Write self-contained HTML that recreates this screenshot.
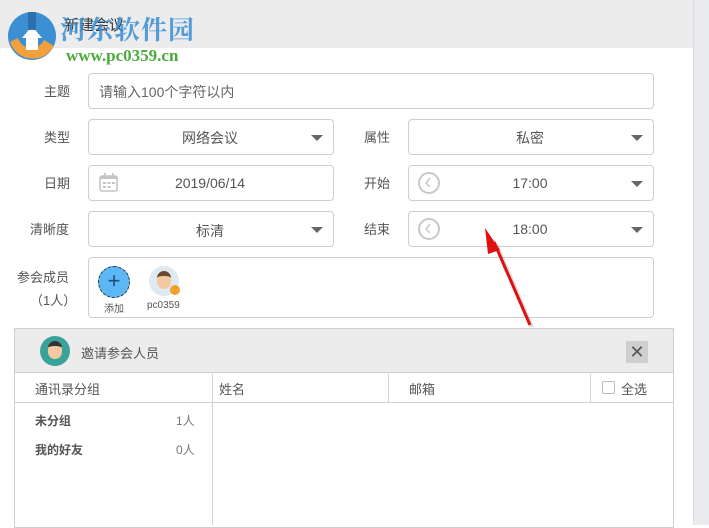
<!DOCTYPE html>
<html><head><meta charset="utf-8"><style>
*{box-sizing:border-box;margin:0;padding:0}
body{width:709px;height:525px;overflow:hidden;background:#fff;font-family:"Liberation Sans","Noto Sans CJK SC",sans-serif;color:#555;font-size:14px;position:relative}
.abs{position:absolute}
.box{position:absolute;border:1px solid #cfcfcf;border-radius:4px;background:#fff}
.lbl{position:absolute;font-size:13px;color:#555}
.val{position:absolute;font-size:14px;color:#555;text-align:center}
.arr{position:absolute;width:0;height:0;border-left:6px solid transparent;border-right:6px solid transparent;border-top:6px solid #666}
</style></head><body>
<div class="abs" style="left:0;top:0;width:693px;height:48px;background:#ececec"></div>
<div class="abs" style="left:693px;top:0;width:16px;height:525px;background:#e9ebee;border-left:1px solid #dcdcdc"></div>
<div class="abs" style="left:64px;top:14px;font-size:15px;color:#333">新建会议</div>
<svg class="abs" style="left:4px;top:8px" width="60" height="60" viewBox="0 0 60 60">
<circle cx="28" cy="28" r="24" fill="#3c8fd3"/>
<path d="M6 34 A24 24 0 0 0 50 38 L40 32 A14 14 0 0 1 14 30Z" fill="#f2a03d"/>
<path d="M18 30 L28 18 L38 30 L34 30 L34 42 L22 42 L22 30Z" fill="#fff"/>
<rect x="24" y="4" width="8" height="18" fill="#2f6fb0"/>
</svg>
<div class="abs" style="left:60px;top:10px;font-size:26px;font-weight:bold;color:#3a8fd6;opacity:.85;letter-spacing:1px;font-family:'Noto Serif CJK SC',serif">河东软件园</div>
<div class="abs" style="left:66px;top:46px;font-size:17px;font-weight:bold;color:#4caa3c;font-family:'Liberation Serif',serif">www.pc0359.cn</div>

<div class="lbl" style="left:44px;top:81px">主题</div>
<div class="box" style="left:88px;top:73px;width:566px;height:36px"></div>
<div class="abs" style="left:99px;top:82px;color:#666">请输入100个字符以内</div>

<div class="lbl" style="left:44px;top:127px">类型</div>
<div class="box" style="left:88px;top:119px;width:246px;height:36px"></div>
<div class="val" style="left:150px;top:128px;width:120px">网络会议</div>
<div class="arr" style="left:311px;top:135px"></div>
<div class="lbl" style="left:364px;top:127px">属性</div>
<div class="box" style="left:408px;top:119px;width:246px;height:36px"></div>
<div class="val" style="left:470px;top:128px;width:120px">私密</div>
<div class="arr" style="left:631px;top:135px"></div>

<div class="lbl" style="left:44px;top:173px">日期</div>
<div class="box" style="left:88px;top:165px;width:246px;height:36px"></div>
<svg class="abs" style="left:98px;top:172px" width="22" height="22" viewBox="0 0 22 22"><rect x="2" y="4" width="17" height="15" rx="2" fill="none" stroke="#c4c4c4" stroke-width="1.6"/><rect x="2" y="4" width="17" height="3" fill="#c4c4c4"/><rect x="6" y="1" width="1.6" height="5" fill="#c4c4c4"/><rect x="14" y="1" width="1.6" height="5" fill="#c4c4c4"/><g fill="#c4c4c4"><rect x="5" y="10" width="3" height="2"/><rect x="9.5" y="10" width="3" height="2"/><rect x="14" y="10" width="3" height="2"/><rect x="5" y="14" width="3" height="2"/><rect x="9.5" y="14" width="3" height="2"/></g></svg>
<div class="val" style="left:150px;top:175px;width:120px">2019/06/14</div>
<div class="lbl" style="left:364px;top:173px">开始</div>
<div class="box" style="left:408px;top:165px;width:246px;height:36px"></div>
<svg class="abs" style="left:417px;top:171px" width="24" height="24" viewBox="0 0 24 24"><circle cx="12" cy="12" r="10" fill="none" stroke="#c8c8c8" stroke-width="2"/><path d="M13 7 L9 12 L13 16" fill="none" stroke="#c8c8c8" stroke-width="1.5"/></svg>
<div class="val" style="left:470px;top:175px;width:120px">17:00</div>
<div class="arr" style="left:631px;top:181px"></div>

<div class="lbl" style="left:30px;top:219px">清晰度</div>
<div class="box" style="left:88px;top:211px;width:246px;height:36px"></div>
<div class="val" style="left:150px;top:221px;width:120px">标清</div>
<div class="arr" style="left:311px;top:227px"></div>
<div class="lbl" style="left:364px;top:219px">结束</div>
<div class="box" style="left:408px;top:211px;width:246px;height:36px"></div>
<svg class="abs" style="left:417px;top:217px" width="24" height="24" viewBox="0 0 24 24"><circle cx="12" cy="12" r="10" fill="none" stroke="#c8c8c8" stroke-width="2"/><path d="M13 7 L9 12 L13 16" fill="none" stroke="#c8c8c8" stroke-width="1.5"/></svg>
<div class="val" style="left:470px;top:221px;width:120px">18:00</div>
<div class="arr" style="left:631px;top:227px"></div>

<div class="lbl" style="left:17px;top:267px;font-size:13px">参会成员</div>
<div class="lbl" style="left:30px;top:290px;font-size:13px">（1人）</div>
<div class="box" style="left:88px;top:257px;width:566px;height:61px"></div>
<div class="abs" style="left:98px;top:266px;width:32px;height:32px;border-radius:50%;background:#5bb8f5;border:1.5px dashed #333;color:#1c4f7a;font-size:22px;line-height:28px;text-align:center">+</div>
<div class="abs" style="left:104px;top:300px;font-size:10px;color:#555">添加</div>
<div class="abs" style="left:149px;top:266px;width:30px;height:30px;border-radius:50%;background:#dfe9f2;overflow:hidden"><div style="margin:5px auto 0;width:14px;height:18px;border-radius:7px;background:#f3c9a4;border-top:5px solid #6a4a2f"></div></div>
<div class="abs" style="left:170px;top:285px;width:10px;height:10px;border-radius:50%;background:#f2a02c"></div>
<div class="abs" style="left:147px;top:300px;font-size:10px;color:#555">pc0359</div>

<div class="abs" style="left:14px;top:328px;width:660px;height:200px;border:1px solid #cfcfcf;background:#fff"></div>
<div class="abs" style="left:15px;top:329px;width:658px;height:44px;background:#ececec;border-bottom:1px solid #d0d0d0"></div>
<div class="abs" style="left:40px;top:336px;width:30px;height:30px;border-radius:50%;background:#3aa399;overflow:hidden"><div style="margin:5px auto 0;width:14px;height:18px;border-radius:7px;background:#f3c9a4;border-top:5px solid #333"></div></div>
<div class="abs" style="left:81px;top:343px;font-size:13px;color:#555">邀请参会人员</div>
<div class="abs" style="left:626px;top:341px;width:22px;height:22px;background:#cfcfcf;color:#555;font-size:18px;line-height:22px;text-align:center">✕</div>
<div class="abs" style="left:15px;top:402px;width:658px;height:1px;background:#d0d0d0"></div>
<div class="abs" style="left:212px;top:374px;width:1px;height:151px;background:#d0d0d0"></div>
<div class="abs" style="left:388px;top:374px;width:1px;height:28px;background:#d0d0d0"></div>
<div class="abs" style="left:590px;top:374px;width:1px;height:28px;background:#d0d0d0"></div>
<div class="abs" style="left:35px;top:379px;font-size:13px">通讯录分组</div>
<div class="abs" style="left:219px;top:379px;font-size:13px">姓名</div>
<div class="abs" style="left:409px;top:379px;font-size:13px">邮箱</div>
<div class="abs" style="left:602px;top:381px;width:13px;height:13px;border:1px solid #bbb;border-radius:2px"></div>
<div class="abs" style="left:621px;top:379px;font-size:13px">全选</div>
<div class="abs" style="left:35px;top:412px;font-size:12px;font-weight:bold;color:#555">未分组</div>
<div class="abs" style="left:176px;top:412px;font-size:12px;color:#777">1人</div>
<div class="abs" style="left:35px;top:441px;font-size:12px;font-weight:bold;color:#555">我的好友</div>
<div class="abs" style="left:176px;top:441px;font-size:12px;color:#777">0人</div>

<svg class="abs" style="left:0;top:0" width="709" height="525"><line x1="532" y1="327" x2="496" y2="244" stroke="#999" stroke-opacity=".35" stroke-width="4"/><line x1="530" y1="325" x2="494" y2="242" stroke="#e01010" stroke-width="3"/><polygon points="485,228 500,250 488,254" fill="#e01010"/></svg>
</body></html>
